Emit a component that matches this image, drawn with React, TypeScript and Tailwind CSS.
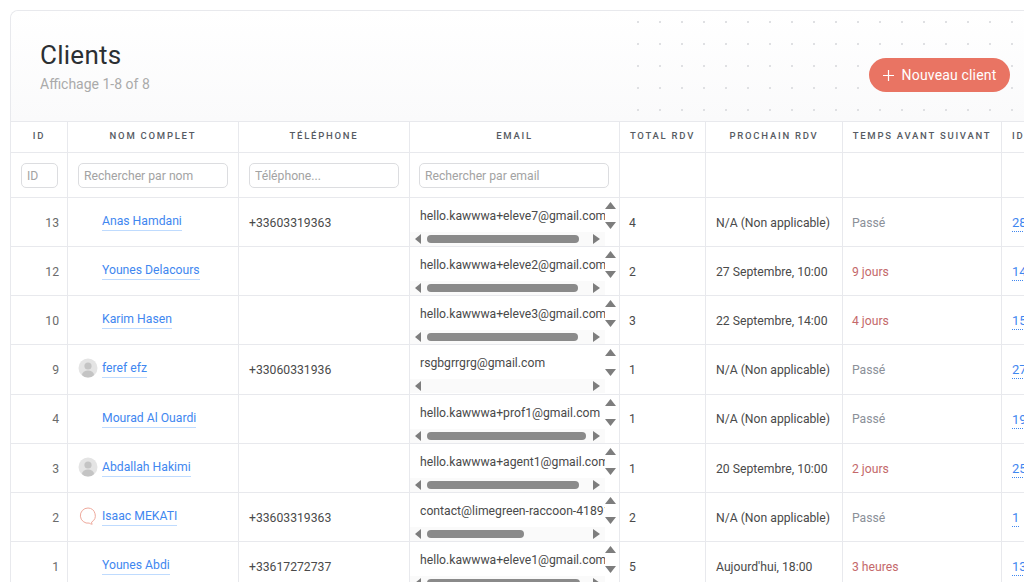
const COLS = "grid grid-cols-[57px_171px_171px_210px_86px_137px_159px_120px]";
const FONT = "font-['Roboto',sans-serif]";

type Client = {
  id: number;
  name: string;
  icon?: "avatar" | "bubble";
  phone?: string;
  email: string;
  thumb: number;
  total: number;
  next: string;
  wait: string;
  ref: string;
};

const clients: Client[] = [
  { id: 13, name: "Anas Hamdani", phone: "+33603319363", email: "hello.kawwwa+eleve7@gmail.com", thumb: 152, total: 4, next: "N/A (Non applicable)", wait: "Passé", ref: "28" },
  { id: 12, name: "Younes Delacours", email: "hello.kawwwa+eleve2@gmail.com", thumb: 151, total: 2, next: "27 Septembre, 10:00", wait: "9 jours", ref: "14" },
  { id: 10, name: "Karim Hasen", email: "hello.kawwwa+eleve3@gmail.com", thumb: 151, total: 3, next: "22 Septembre, 14:00", wait: "4 jours", ref: "15" },
  { id: 9, name: "feref efz", icon: "avatar", phone: "+33060331936", email: "rsgbgrrgrg@gmail.com", thumb: 0, total: 1, next: "N/A (Non applicable)", wait: "Passé", ref: "27" },
  { id: 4, name: "Mourad Al Ouardi", email: "hello.kawwwa+prof1@gmail.com", thumb: 159, total: 1, next: "N/A (Non applicable)", wait: "Passé", ref: "19" },
  { id: 3, name: "Abdallah Hakimi", icon: "avatar", email: "hello.kawwwa+agent1@gmail.com", thumb: 152, total: 1, next: "20 Septembre, 10:00", wait: "2 jours", ref: "25" },
  { id: 2, name: "Isaac MEKATI", icon: "bubble", phone: "+33603319363", email: "contact@limegreen-raccoon-418912.com", thumb: 97, total: 2, next: "N/A (Non applicable)", wait: "Passé", ref: "1" },
  { id: 1, name: "Younes Abdi", phone: "+33617272737", email: "hello.kawwwa+eleve1@gmail.com", thumb: 153, total: 5, next: "Aujourd'hui, 18:00", wait: "3 heures", ref: "13" },
];

const headers = ["ID", "NOM COMPLET", "TÉLÉPHONE", "EMAIL", "TOTAL RDV", "PROCHAIN RDV", "TEMPS AVANT SUIVANT"];

function Avatar() {
  return (
    <svg width="20" height="20" viewBox="0 0 20 20" className="shrink-0">
      <defs>
        <clipPath id="av">
          <circle cx="10" cy="10" r="9.5" />
        </clipPath>
      </defs>
      <circle cx="10" cy="10" r="9.5" fill="#e4e4e4" />
      <g clipPath="url(#av)" fill="#c4c4c4">
        <circle cx="10" cy="8" r="3.6" />
        <ellipse cx="10" cy="17" rx="6" ry="4.6" />
      </g>
    </svg>
  );
}

function Bubble() {
  return (
    <svg width="20" height="20" viewBox="0 0 20 20" fill="none" stroke="#eea99c" strokeWidth="1" className="shrink-0">
      <path d="M10 2a7.6 7.6 0 1 0 1.2 15.1c.8.6 1.8 1 3 1.1-.5-.7-.7-1.3-.6-2.1A7.6 7.6 0 0 0 10 2Z" />
    </svg>
  );
}

function Arrow({ dir }: { dir: "up" | "down" | "left" | "right" }) {
  const points = {
    up: "0,7 5.5,0 11,7",
    down: "0,0 11,0 5.5,7",
    left: "6,0 6,10 0,5",
    right: "0,0 7,5 0,10",
  }[dir];
  const vertical = dir === "up" || dir === "down";
  return (
    <svg width={vertical ? 11 : dir === "left" ? 6 : 7} height={vertical ? 7 : 10} className="shrink-0 fill-[#7d7d7d]">
      <polygon points={points} />
    </svg>
  );
}

function EmailCell({ email, thumb }: { email: string; thumb: number }) {
  return (
    <div className="flex h-full border-r border-[#e8e9ed]">
      <div className="flex w-[195px] flex-col">
        <div className="ml-[10px] mt-[7px] h-[26px] w-[185px] overflow-hidden whitespace-nowrap text-[12.2px] leading-[22px] text-[#4a4a4a]">
          {email}
        </div>
        <div className="mt-[1px] flex h-[14px] items-center bg-[#fafafa] pl-[5px]">
          <Arrow dir="left" />
          <div className="ml-[6px] w-[166px]">
            {thumb > 0 && <div className="h-[8px] rounded-full bg-[#8a8a8a]" style={{ width: thumb }} />}
          </div>
          <Arrow dir="right" />
        </div>
      </div>
      <div className="flex h-[31px] flex-col justify-between pt-[4px]">
        <Arrow dir="up" />
        <Arrow dir="down" />
      </div>
    </div>
  );
}

function FilterInput({ placeholder }: { placeholder: string }) {
  return (
    <input
      placeholder={placeholder}
      className="h-[25px] w-full rounded-[5px] border border-[#dcdde0] bg-white px-[5px] pt-[2px] text-[12.2px] outline-none placeholder:text-[#a3a3a3]"
    />
  );
}

export default function App() {
  return (
    <div className={`h-[582px] w-[1024px] overflow-hidden bg-white pl-[10px] pt-[10px] ${FONT}`}>
      <div className="w-[1120px] rounded-t-[8px] border border-b-0 border-[#e8e9ed]">
        {/* Header */}
        <div className="relative flex h-[111px] items-start justify-between rounded-t-[8px] border-b border-[#e8e9ed] bg-gradient-to-b from-white to-[#fafafb] pl-[29px]">
          <div
            className="absolute left-[616px] top-0 h-[110px] w-[400px] bg-[radial-gradient(circle,#dfe0e3_0.8px,transparent_1px)] bg-[length:22px_22px]"
          />
          <div>
            <h1 className="mt-[27px] text-[26px] leading-[34px] tracking-[0.01em] text-[#2b2f33]">Clients</h1>
            <p className="mt-[2px] text-[14px] leading-[20px] text-[#aaaaaa]">Affichage 1-8 of 8</p>
          </div>
          <button className="relative mr-[119px] mt-[47px] flex h-[34px] w-[141px] items-center justify-center gap-[8px] rounded-full bg-[#e97463] text-[14px] tracking-[0.012em] text-white">
            <svg width="11" height="11" viewBox="0 0 11 11" stroke="white" strokeWidth="1.2">
              <path d="M5.5 0v11M0 5.5h11" />
            </svg>
            Nouveau client
          </button>
        </div>

        {/* Column titles */}
        <div className={`${COLS} h-[31px] border-b border-[#e8e9ed]`}>
          {headers.map((h) => (
            <div
              key={h}
              className="flex items-center justify-center whitespace-nowrap border-r border-[#e8e9ed] pb-[1px] text-[9.5px] font-medium tracking-[0.185em] text-[#565b63]"
            >
              {h}
            </div>
          ))}
          <div className="flex items-center pb-[1px] pl-[10px] text-[9.5px] font-medium tracking-[0.185em] text-[#565b63]">ID</div>
        </div>

        {/* Filters */}
        <div className={`${COLS} h-[45px] border-b border-[#e8e9ed]`}>
          <div className="flex items-center border-r border-[#e8e9ed] pl-[10px] pr-[9px]">
            <FilterInput placeholder="ID" />
          </div>
          <div className="flex items-center border-r border-[#e8e9ed] pl-[10px] pr-[10px]">
            <FilterInput placeholder="Rechercher par nom" />
          </div>
          <div className="flex items-center border-r border-[#e8e9ed] pl-[10px] pr-[10px]">
            <FilterInput placeholder="Téléphone..." />
          </div>
          <div className="flex items-center border-r border-[#e8e9ed] pl-[9px] pr-[10px]">
            <FilterInput placeholder="Rechercher par email" />
          </div>
          <div className="border-r border-[#e8e9ed]" />
          <div className="border-r border-[#e8e9ed]" />
          <div className="border-r border-[#e8e9ed]" />
          <div />
        </div>

        {/* Rows */}
        {clients.map((c) => (
          <div key={c.id} className={`${COLS} h-[49.14px] border-b border-[#e8e9ed] text-[12.2px] text-[#4a4a4a]`}>
            <div className="flex items-center justify-end border-r border-[#e8e9ed] pr-[8px] pt-[2px] text-[#6b6b6b]">{c.id}</div>
            <div className="flex items-start gap-[4px] border-r border-[#e8e9ed] pl-[10px] pt-[15px]">
              <div className="-mt-[2px] h-[20px] w-[20px] shrink-0">
                {c.icon === "avatar" && <Avatar />}
                {c.icon === "bubble" && <Bubble />}
              </div>
              <span className="h-[18px] border-b border-[#bfdbfe] leading-[17px] text-[#3f87f0]">{c.name}</span>
            </div>
            <div className="flex items-center border-r border-[#e8e9ed] pl-[10px] pt-[2px]">{c.phone}</div>
            <EmailCell email={c.email} thumb={c.thumb} />
            <div className="flex items-center border-r border-[#e8e9ed] pl-[9px] pt-[2px]">{c.total}</div>
            <div className="flex items-center border-r border-[#e8e9ed] pl-[10px] pt-[2px]">{c.next}</div>
            <div className={`flex items-center border-r border-[#e8e9ed] pl-[9px] pt-[2px] ${c.wait === "Passé" ? "text-[#8b9099]" : "text-[#c4686a]"}`}>
              {c.wait}
            </div>
            <div className="flex items-center pl-[10px] pt-[2px]">
              <span className="border-b border-dotted border-[#3f87f0] text-[13px] leading-[17px] text-[#3f87f0]">{c.ref}</span>
            </div>
          </div>
        ))}
      </div>
    </div>
  );
}
